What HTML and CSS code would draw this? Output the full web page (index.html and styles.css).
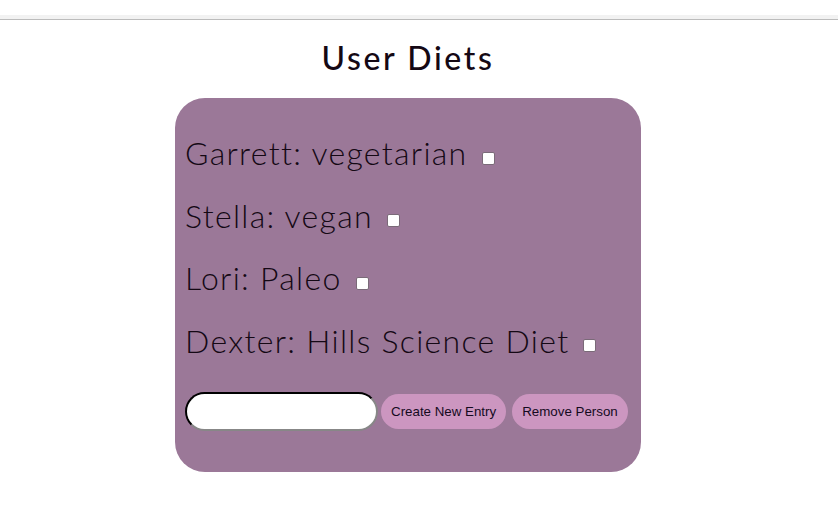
FILE: index.html
```html
<!DOCTYPE html>
<html>
<head>
<meta charset="utf-8">
<link rel="stylesheet" href="styles.css">
</head>
<body>
<div class="topbar"></div>
<main class="page">
  <h1 class="title">User Diets</h1>
  <section class="card">
    <ul class="list">
      <li class="item">Garrett: vegetarian <input type="checkbox" class="check"></li>
      <li class="item">Stella: vegan <input type="checkbox" class="check"></li>
      <li class="item">Lori: Paleo <input type="checkbox" class="check"></li>
      <li class="item">Dexter: Hills Science Diet <input type="checkbox" class="check"></li>
    </ul>
    <div class="controls">
      <input type="text" class="name-input">
      <button class="btn">Create New Entry</button>
      <button class="btn">Remove Person</button>
    </div>
  </section>
</main>
</body>
</html>
```
FILE: styles.css
```css
html, body {
  margin: 0;
  padding: 0;
  background: #ffffff;
}
body {
  font-family: "Lato", "Noto Sans", sans-serif;
  color: #140814;
}
.topbar {
  margin-top: 15px;
  height: 4px;
  background: #f2f2f2;
  border-bottom: 1px solid #bcbcbc;
}
.page {
  width: 816px;
  display: flex;
  flex-direction: column;
  align-items: center;
}
.title {
  font-weight: 500;
  font-size: 32px;
  letter-spacing: 2.6px;
  margin: 18px 0 20px;
  line-height: 40px;
}
.card {
  width: 446px;
  background: #9b7898;
  border-radius: 30px;
  padding: 35px 10px 41px;
}
.list {
  list-style: none;
  margin: 0;
  padding: 0;
}
.item {
  font-size: 32px;
  font-weight: 300;
  letter-spacing: 1.3px;
  line-height: 40px;
  margin-bottom: 22.5px;
  display: flex;
  align-items: center;
}
.check {
  width: 13px;
  height: 13px;
  margin: 10px 0 0 14px;
  appearance: none;
  background: #fff;
  border: 1px solid #7a6a78;
  border-radius: 2px;
}
.controls {
  display: flex;
  align-items: center;
  gap: 6px;
  margin-top: 31px;
}
.name-input {
  width: 193px;
  box-sizing: border-box;
  height: 39px;
  border: 2px inset #333;
  border-radius: 20px;
  background: #fff;
  margin-right: -3px;
}
.btn {
  font-family: "Liberation Sans", Arial, sans-serif;
  font-size: 13.33px;
  background: #cc96c0;
  color: #140a1e;
  border: none;
  border-radius: 18px;
  height: 35px;
  padding: 0 10px;
}
```
